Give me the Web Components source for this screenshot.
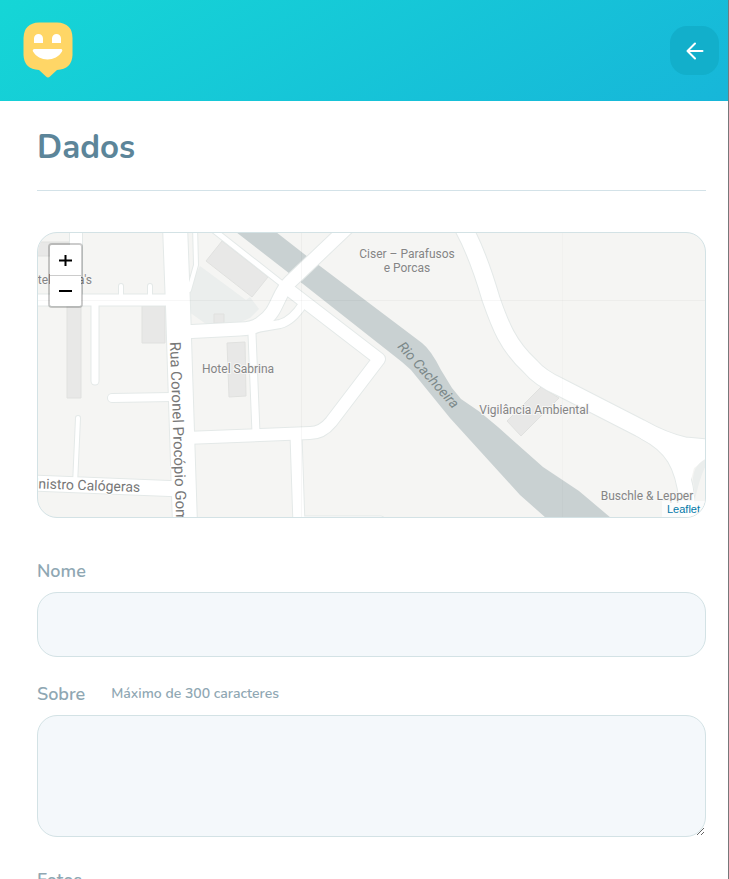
<!DOCTYPE html>
<html lang="pt-BR">
<head>
<meta charset="utf-8">
<title>Dados</title>
<style>
html { background: #fff; }
body { margin: 0; font-family: Nunito, Lato, sans-serif; color: #8fa7b3; }
</style>
</head>
<body>
<app-page>
  <app-header slot="header"></app-header>
  <section-title>Dados</section-title>
  <location-map></location-map>
  <form-field label="Nome" name="nome"></form-field>
  <form-field label="Sobre" name="sobre" hint="Máximo de 300 caracteres" multiline></form-field>
  <form-field label="Fotos" name="fotos"></form-field>
</app-page>
<script>
const attach = (host, html) => { host.attachShadow({ mode: 'open' }).innerHTML = html; };

customElements.define('app-page', class extends HTMLElement {
  constructor() {
    super();
    attach(this, `
      <style>
        :host { display: block; box-sizing: border-box; height: 100vh; overflow: hidden; border-right: 1px solid #77787a; }
        main { padding: 26px 22px 32px 37px; }
      </style>
      <slot name="header"></slot>
      <main><slot></slot></main>`);
  }
});

customElements.define('app-header', class extends HTMLElement {
  constructor() {
    super();
    attach(this, `
      <style>
        :host { display: flex; align-items: center; justify-content: space-between; box-sizing: border-box;
          height: 101px; padding: 0 9px 0 23px; background: linear-gradient(150deg, #15d6d6 0%, #17b6d9 100%); }
        .logo, button svg { display: block; }
        button { display: grid; place-items: center; width: 49px; height: 49px; padding: 0; border: 0;
          border-radius: 17px; background: #12afcb; cursor: pointer; }
      </style>
      <svg class="logo" width="50" height="58" viewBox="0 0 50 58" role="img" aria-label="Logo">
        <path fill="#ffd666" d="M16 0.500H34Q49.500 1 49.500 16V33Q49 47 34 48L27 54.500Q25 56.500 23 54.500L16 48Q1 47 0.500 33V16Q1 1 16 0.500Z"/>
        <path fill="#fff" d="M11 21V16.500a4.500 4.500 0 0 1 9 0V21ZM29 21V16.500a4.500 4.500 0 0 1 9 0V21ZM11.500 27H38Q40 27.500 39 29.500C33 40 16 40 10 29.500Q9 27.500 11.500 27Z"/>
      </svg>
      <button type="button" aria-label="Voltar">
        <svg width="24" height="24" viewBox="0 0 24 24" fill="none" stroke="#fff" stroke-width="2" stroke-linecap="round" stroke-linejoin="round"><path d="M19.500 12H4.500M12 19.500 4.500 12 12 4.500"/></svg>
      </button>`);
  }
});

customElements.define('section-title', class extends HTMLElement {
  constructor() {
    super();
    attach(this, `
      <style>
        :host { display: block; margin-bottom: 41px; padding-bottom: 21px; border-bottom: 1px solid #d3e2e8; }
        h1 { margin: 0; font-size: 33px; line-height: 42px; font-weight: 700; color: #5c8599; }
      </style>
      <h1><slot></slot></h1>`);
  }
});

/* Streets as [width, path]; each is drawn once as casing and once as surface. */
const ROADS = [
  [24, 'M175 225L178 306L180 370L185 525'],
  [11, 'M30 300H178'],
  [4, 'M121 286V300M150 286V300'],
  [7, 'M95 300V381'],
  [8, 'M112 398L172 397'],
  [4, 'M78 418L75 485'],
  [15, 'M30 483L182 489'],
  [12, 'M76 225V300'],
  [4, 'M195 225L196 265L189 290'],
  [5, 'M206 224L286 287'],
  [13, 'M351 224L290 282C277 294 278 312 262 322Q255 329 240 329L182 332'],
  [8, 'M303 304Q292 321 280 324L240 331'],
  [12, 'M288 289L379 359L331 422Q322 433 310 433L185 438'],
  [7, 'M252 334L256 433'],
  [11, 'M296 435L299 525'],
  [5, 'M303 519H381'],
  [17, 'M460 222Q476 248 491 299C500 325 508 346 530 366Q540 378 560 387L640 428Q665 442 685 446L720 449'],
  [15, 'M645 432C672 446 683 464 687 500L689 530']
];
const roadPaths = extra => ROADS.map(([w, d]) => `<path stroke-width="${w + extra}" d="${d}"/>`).join('');

customElements.define('location-map', class extends HTMLElement {
  constructor() {
    super();
    attach(this, `
      <style>
        :host { display: block; position: relative; height: 284px; margin-bottom: 41px; overflow: hidden;
          border: 1px solid #d3e2e5; border-radius: 20px; background: #f5f5f3; }
        .tiles { display: block; width: 100%; height: 100%; }
        text { font-family: "DIN Pro", Roboto, sans-serif; font-size: 12px; fill: #858585; }
        .halo { stroke: #f7f7f6; stroke-width: 2px; paint-order: stroke; }
        .street { font-size: 14px; fill: #777; stroke: #fff; stroke-width: 2px; paint-order: stroke; }
        .avenue { font-size: 15px; }
        .river { font-size: 14px; font-style: italic; fill: #7b8889; }
        .zoom { position: absolute; top: 10px; left: 10px; display: grid; border: 2px solid rgba(0,0,0,.2);
          border-radius: 4px; background-clip: padding-box; }
        button { display: grid; place-items: center; width: 31px; height: 30px; padding: 0; border: 0;
          background: #fff; color: #000; cursor: pointer; }
        button:first-child { height: 31px; border-bottom: 1px solid #ccc; border-radius: 2px 2px 0 0; }
        button:last-child { border-radius: 0 0 2px 2px; }
        .credit { position: absolute; right: 0; bottom: 0; padding: 0 5px; background: rgba(255,255,255,.7);
          font: 11px/16px "Liberation Sans", Arial, sans-serif; }
        a { color: #0078a8; text-decoration: none; }
      </style>
      <svg class="tiles" viewBox="38 233 667 284" preserveAspectRatio="xMinYMin slice" role="img" aria-label="Mapa">
        <path fill="#ebeeed" d="M200 266L246 300L250 297L259 309L250 318L236 324H206L189 312V287Z"/>
        <g fill="#e8e8e7" stroke="#e0e1df" stroke-width="1">
          <path d="M36 242H70V256H36ZM67 306H81V398H67ZM142 306H165V343H142ZM227 343L245 342L246 396L229 397ZM222 241L206 261L252 297L268 277ZM541 387L507 421L521 436L559 398ZM214 314H224V323H214Z"/>
        </g>
        <path fill="#c9d1d2" d="M236 232H276L308 257L422 343Q431 350 441 370L452 388L461 399L480 412L498 427L543 467L579 491L611 518H546L520 495L450 418L411 370L402 362L303 284Z"/>
        <g fill="none" stroke="#e4e9e8" stroke-linecap="round" stroke-linejoin="round">${roadPaths(2)}</g>
        <g fill="none" stroke="#fff" stroke-linecap="round" stroke-linejoin="round">${roadPaths(0)}</g>
        <path fill="#fff" d="M660 440L710 440V457L694 468L686 500Z"/>
        <path fill="#ebeeed" d="M710 457Q693 463 693 480L698 520H710Z"/>
        <path fill="#f5f5f3" d="M710 458Q700 474 695 500L698 520H710Z"/>
        <path fill="none" stroke="#000" stroke-opacity=".03" d="M38 300.500H720M301.500 233V517"/>
        <path fill="none" stroke="#000" stroke-opacity=".015" d="M562.500 233V517"/>
        <g class="halo">
          <text x="92" y="284" text-anchor="end">Hotel Maria's</text>
          <text x="407" y="258" text-anchor="middle">Ciser – Parafusos</text>
          <text x="407" y="272" text-anchor="middle">e Porcas</text>
          <text x="238" y="373" text-anchor="middle">Hotel Sabrina</text>
          <text x="534" y="414" text-anchor="middle">Vigilância Ambiental</text>
          <text x="647" y="500" text-anchor="middle">Buschle &amp; Lepper</text>
        </g>
        <text class="street" text-anchor="end" transform="translate(140 492) rotate(2)">Ministro Calógeras</text>
        <text class="street avenue" transform="translate(170 342) rotate(88)">Rua Coronel Procópio Gomes</text>
        <text class="river" transform="translate(397 347) rotate(48)">Rio Cachoeira</text>
      </svg>
      <div class="zoom">
        <button type="button" aria-label="Aproximar"><svg width="13" height="13" viewBox="0 0 13 13"><path fill="none" stroke="#000" stroke-width="2" d="M0 6.500H13M6.500 1V12"/></svg></button>
        <button type="button" aria-label="Afastar"><svg width="13" height="13" viewBox="0 0 13 13"><path fill="none" stroke="#000" stroke-width="2" d="M0 6H13"/></svg></button>
      </div>
      <div class="credit"><a href="https://leafletjs.com">Leaflet</a></div>`);
  }
});

customElements.define('form-field', class extends HTMLElement {
  connectedCallback() {
    if (this.shadowRoot) return;
    const name = this.getAttribute('name');
    const hint = this.getAttribute('hint');
    const multiline = this.hasAttribute('multiline');
    attach(this, `
      <style>
        :host { display: block; margin-bottom: 25px; }
        :host([multiline]) { margin-bottom: 31px; }
        label { display: flex; align-items: center; gap: 26px; margin-bottom: 9px; font-size: 18px; line-height: 24px; font-weight: 600; color: #8fa7b3; }
        small { font-size: 14px; font-weight: 600; }
        input, textarea { display: block; box-sizing: border-box; width: 100%; margin: 0; padding: 0 24px;
          border: 1px solid #d3e2e5; border-radius: 20px; background: #f4f8fb; color: #5c8599; font: inherit; outline: 0; }
        input { height: 65px; }
        textarea { height: 122px; padding: 16px 24px; resize: vertical; }
      </style>
      <label for="${name}">${this.getAttribute('label')}${hint ? `<small>${hint}</small>` : ''}</label>
      ${multiline ? `<textarea id="${name}" name="${name}" maxlength="300"></textarea>` : `<input id="${name}" name="${name}" type="text">`}`);
  }
});
</script>
</body>
</html>
